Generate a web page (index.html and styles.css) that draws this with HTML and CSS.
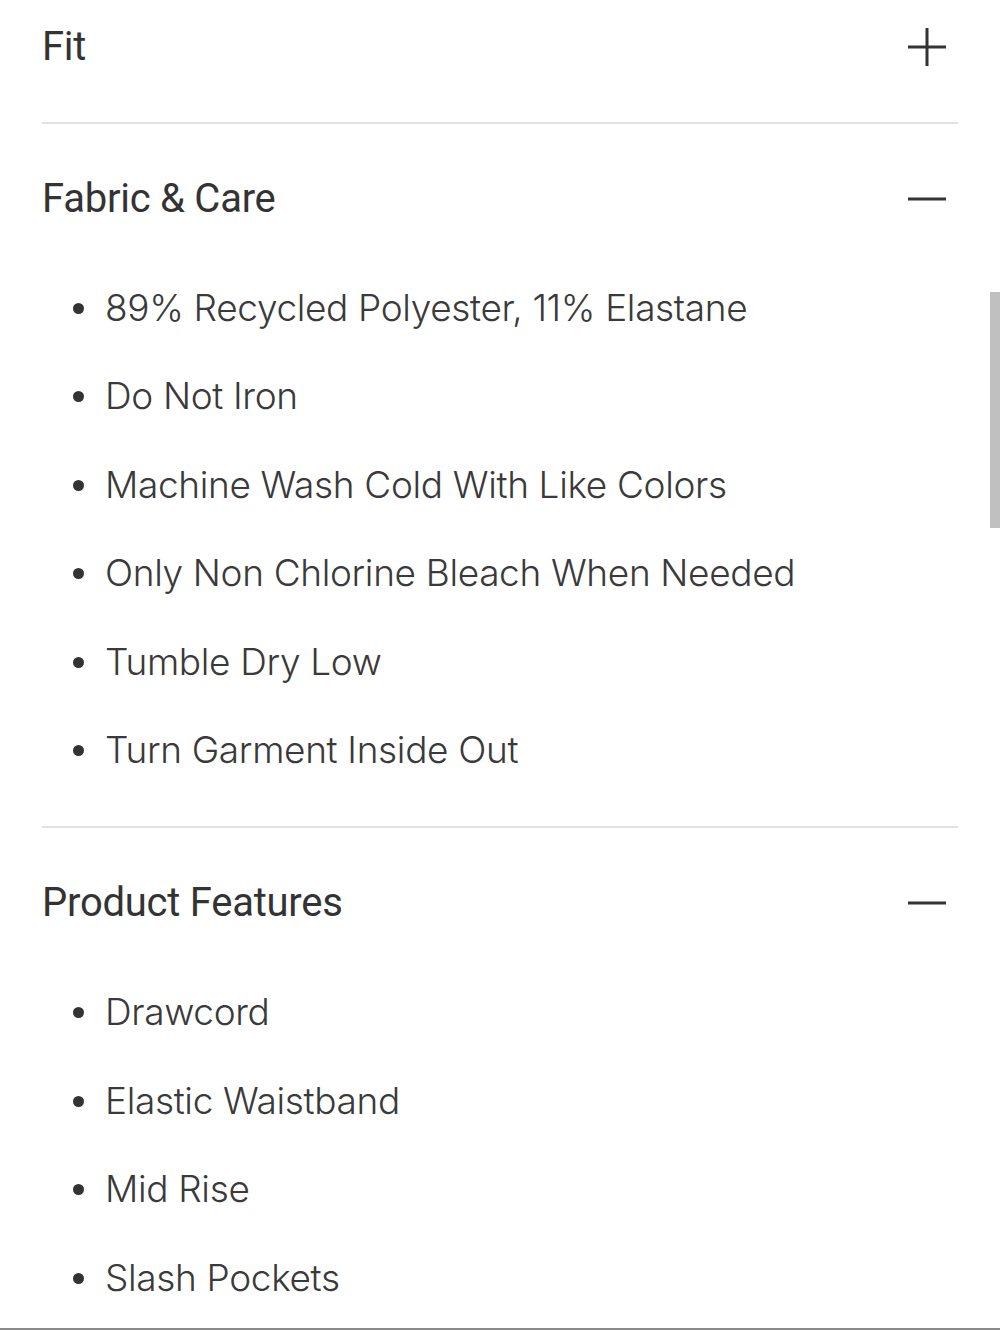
FILE: index.html
```html
<!DOCTYPE html>
<html lang="en">
<head>
    <meta charset="UTF-8">
    <meta name="viewport" content="width=device-width, initial-scale=1.0">
    <title>Product Details</title>
    <link rel="stylesheet" href="styles.css">
</head>
<body>
    <div class="details">
        <section class="panel first">
            <div class="panel-head">
                <h2>Fit</h2>
                <svg class="toggle" width="40" height="40" viewBox="0 0 40 40">
                    <path d="M1 20H39M20 1V39" stroke="#333" stroke-width="3" fill="none"/>
                </svg>
            </div>
        </section>

        <section class="panel">
            <div class="panel-head">
                <h2>Fabric &amp; Care</h2>
                <svg class="toggle" width="40" height="40" viewBox="0 0 40 40">
                    <path d="M1 20H39" stroke="#333" stroke-width="3" fill="none"/>
                </svg>
            </div>
            <ul class="panel-list">
                <li>89% Recycled Polyester, 11% Elastane</li>
                <li>Do Not Iron</li>
                <li>Machine Wash Cold With Like Colors</li>
                <li>Only Non Chlorine Bleach When Needed</li>
                <li>Tumble Dry Low</li>
                <li>Turn Garment Inside Out</li>
            </ul>
        </section>

        <section class="panel">
            <div class="panel-head">
                <h2>Product Features</h2>
                <svg class="toggle" width="40" height="40" viewBox="0 0 40 40">
                    <path d="M1 20H39" stroke="#333" stroke-width="3" fill="none"/>
                </svg>
            </div>
            <ul class="panel-list">
                <li>Drawcord</li>
                <li>Elastic Waistband</li>
                <li>Mid Rise</li>
                <li>Slash Pockets</li>
            </ul>
        </section>
    </div>

    <div class="scroll-thumb"></div>
    <div class="bottom-edge"></div>
</body>
</html>
```

FILE: styles.css
```css
body {
    margin: 0;
    background: #fff;
    color: #333;
    height: 1330px;
    overflow: hidden;
}
.details {
    padding: 0 42px;
}
.panel {
    border-bottom: 2px solid #e2e2e2;
    padding-bottom: 32px;
}
.panel.first {
    padding-bottom: 50px;
}
.panel-head {
    display: flex;
    justify-content: space-between;
    align-items: center;
    padding-top: 50px;
}
.panel.first .panel-head {
    padding-top: 22px;
}
.panel-head h2 {
    margin: 0;
    font-family: Roboto, sans-serif;
    font-weight: 400;
    font-size: 40px;
    line-height: 50px;
    letter-spacing: -0.25px;
    color: #333;
}
.toggle {
    margin-right: 11px;
}
.panel-list {
    list-style: none;
    margin: 40px 0 0;
    padding: 0 0 0 63px;
}
.panel-list li {
    position: relative;
    font-family: Inter, sans-serif;
    font-weight: 300;
    font-size: 37px;
    line-height: 88.4px;
    letter-spacing: -0.35px;
    color: #3a3a3a;
}
.panel-list li::before {
    content: "";
    position: absolute;
    left: -32px;
    top: 39px;
    width: 11px;
    height: 11px;
    border-radius: 50%;
    background: #333;
}
.scroll-thumb {
    position: fixed;
    right: 0;
    top: 292px;
    width: 10px;
    height: 236px;
    background: #c0c0c0;
}
.bottom-edge {
    position: fixed;
    left: 0;
    right: 0;
    bottom: 0;
    height: 2px;
    background: #8a8a8a;
}
```
